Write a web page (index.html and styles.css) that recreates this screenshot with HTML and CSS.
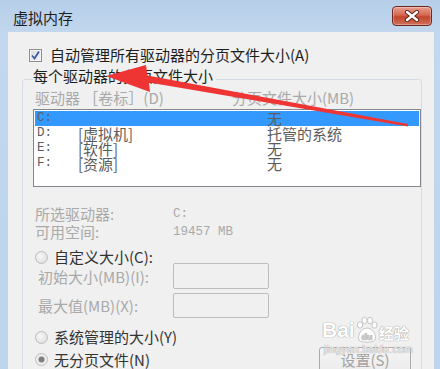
FILE: index.html
```html
<!DOCTYPE html>
<html lang="zh-CN">
<head>
  <meta charset="UTF-8" />
  <meta name="viewport" content="width=device-width, initial-scale=1.0"/>
  <title>虚拟内存</title>
  <link rel="stylesheet" href="styles.css">
</head>
<body>

  <div class="window">
    <header class="titlebar">
      <div class="title">虚拟内存</div>
      <button class="close-btn" aria-label="关闭">
        <svg width="16" height="12" viewBox="0 0 16 12">
          <path d="M3 2 L13 10 M13 2 L3 10" stroke="#5a231b" stroke-width="4.2" stroke-linecap="round"/>
          <path d="M3 2 L13 10 M13 2 L3 10" stroke="#fff" stroke-width="2.4" stroke-linecap="round"/>
        </svg>
      </button>
    </header>

    <div class="client">
      <label class="check-row">
        <span class="checkbox">
          <svg width="11" height="11" viewBox="0 0 11 11">
            <path d="M2 5.5 L4.5 8.5 L9 1.5" fill="none" stroke="#3c5aa3" stroke-width="1.8"/>
          </svg>
        </span>
        自动管理所有驱动器的分页文件大小(A)
      </label>

      <fieldset class="group">
        <legend>每个驱动器的分页文件大小</legend>

        <div class="cols">
          <span class="col-drive">驱动器 ［卷标］(D)</span>
          <span>分页文件大小(MB)</span>
        </div>

        <div class="list">
          <div class="row selected"><span class="drv">C:</span><span></span><span>无</span></div>
          <div class="row"><span class="drv">D:</span><span>[虚拟机]</span><span>托管的系统</span></div>
          <div class="row"><span class="drv">E:</span><span>[软件]</span><span>无</span></div>
          <div class="row"><span class="drv">F:</span><span>[资源]</span><span>无</span></div>
        </div>

        <div class="info">
          <span class="info-label">所选驱动器:</span><span class="mono">C:</span>
          <span class="info-label">可用空间:</span><span class="mono">19457 MB</span>
        </div>

        <div class="radio-row">
          <span class="radio"></span>自定义大小(C):
        </div>

        <div class="sizes">
          <span class="size-label">初始大小(MB)(I):</span><span class="field"></span>
          <span class="size-label">最大值(MB)(X):</span><span class="field"></span>
        </div>

        <div class="radio-row sys">
          <span class="radio"></span>系统管理的大小(Y)
        </div>

        <div class="bottom-row">
          <div class="radio-row">
            <span class="radio checked"></span>无分页文件(N)
          </div>
          <button class="btn">设置(S)</button>
        </div>
      </fieldset>
    </div>

    <div class="watermark">
      <span class="wm-bai">Bai</span>
      <svg class="wm-paw" width="24" height="28" viewBox="0 0 24 28">
        <ellipse cx="5" cy="9" rx="2.6" ry="3.2" fill="#fff" stroke="#c4c4c4"/>
        <ellipse cx="9.5" cy="4.5" rx="2.6" ry="3.2" fill="#fff" stroke="#c4c4c4"/>
        <ellipse cx="15" cy="4.5" rx="2.6" ry="3.2" fill="#fff" stroke="#c4c4c4"/>
        <ellipse cx="19.5" cy="9" rx="2.6" ry="3.2" fill="#fff" stroke="#c4c4c4"/>
        <path d="M12 12 C6 12 2 20 4 24 C6 27 18 27 20 24 C22 20 18 12 12 12 Z" fill="#fff" stroke="#c4c4c4"/>
        <text x="12" y="24" text-anchor="middle" font-family="Liberation Sans" font-weight="bold" font-size="9" fill="#d0d0d0">du</text>
      </svg>
      <span class="wm-jy">经验</span>
      <span class="wm-url">jingyan.baidu.com</span>
    </div>

    <svg class="arrow" width="440" height="369" viewBox="0 0 440 369">
      <polygon points="106,76 146,65 147.5,75.5 408,124 408,126.5 149,82.5 150,92" fill="#ef3434"/>
    </svg>
  </div>

</body>
</html>
```

FILE: styles.css
```css
* { box-sizing: border-box; }

body {
  margin: 0;
  font-family: "Noto Sans CJK SC", "Noto Sans", sans-serif;
  font-size: 15px;
  color: #1e1e1e;
  background: #bfd5ed;
}

.window {
  position: relative;
  width: 440px;
  height: 369px;
  overflow: hidden;
  padding: 0 6px 0 8px;
  background: linear-gradient(#b6cee9, #c3d8ee 36px, #bdd4ec);
}

/* title bar */

.titlebar {
  display: flex;
  justify-content: space-between;
  align-items: flex-start;
  height: 32px;
}

.title {
  margin: 9px 0 0 5px;
  line-height: 17px;
  color: #1e1e1e;
}

.close-btn {
  display: flex;
  align-items: center;
  justify-content: center;
  width: 40px;
  height: 20px;
  margin: 6px 2px 0 0;
  padding: 0;
  border: 1px solid #6e2a20;
  border-radius: 4px;
  background: linear-gradient(#e9a091, #d5664f 45%, #c2452c 55%, #d0705a);
  box-shadow: inset 0 0 0 1px rgba(255,255,255,0.3);
}

/* client area */

.client {
  height: 337px;
  padding: 14px 12px 0 14px;
  background: #f0f0f0;
}

.check-row {
  display: flex;
  align-items: center;
  gap: 8px;
  height: 18px;
  margin-left: 7px;
  line-height: 18px;
}

.checkbox {
  display: flex;
  align-items: center;
  justify-content: center;
  width: 13px;
  height: 13px;
  border: 1px solid #8f8f8f;
  background: linear-gradient(135deg, #dcdcdc, #f7f7f7);
  box-shadow: inset 0 0 0 1px #f4f4f4;
}

.group {
  margin: 4px 0 0;
  padding: 0 10px 14px;
  min-width: 0;
  border: 1px solid #d5dce3;
  border-radius: 3px;
}

.group legend {
  padding: 0 3px 6px 0;
  line-height: 16px;
  color: #1e1e1e;
}

.cols {
  display: flex;
  padding-left: 2px;
  line-height: 16px;
  color: #a9a9a9;
}

.col-drive {
  width: 197px;
}

/* drive list */

.list {
  height: 78px;
  margin: 3px -10px 0 0;
  padding: 1px;
  border: 1px solid #828790;
  background: #fff;
  color: #5c5c5c;
}

.row {
  display: grid;
  grid-template-columns: 41px 189px 1fr;
  height: 15px;
  padding-left: 2px;
  line-height: 15px;
}

.row.selected {
  background: #3399ff;
}

.drv, .mono {
  font-family: "Liberation Mono", monospace;
  font-size: 12.5px;
}

/* selected drive info */

.info {
  display: grid;
  grid-template-columns: 140px auto;
  margin-top: 18px;
  line-height: 18px;
  color: #a9a9a9;
}

.info-label {
  padding-left: 2px;
}

.radio-row {
  display: flex;
  align-items: center;
  gap: 6px;
  margin: 7px 0 0 2px;
  line-height: 18px;
  color: #333;
}

.radio-row.sys {
  margin-top: 10px;
}

.radio {
  width: 13px;
  height: 13px;
  border: 1px solid #bcbcbc;
  border-radius: 50%;
  background: radial-gradient(circle at 40% 40%, #f8f8f8, #dadada);
}

.radio.checked {
  background: radial-gradient(circle, #7e7e7e 0 2.6px, #cfcfcf 3.2px, #f3f3f3 4.2px, #dcdcdc);
}

.sizes {
  display: grid;
  grid-template-columns: 140px 96px;
  grid-template-rows: 26px 25px;
  row-gap: 4px;
  align-items: center;
  margin-top: -3px;
  color: #a9a9a9;
}

.size-label {
  padding-left: 5px;
}

.field {
  align-self: stretch;
  border: 1px solid #bdbdbd;
  border-radius: 2px;
  background: #f0f0f0;
}

.bottom-row {
  display: flex;
  justify-content: space-between;
  align-items: center;
  margin-top: 1px;
}

.bottom-row .radio-row {
  margin-top: 0;
}

.btn {
  width: 92px;
  height: 25px;
  padding: 0;
  border: 1px solid #adadad;
  border-radius: 3px;
  background: linear-gradient(#f6f6f6, #ebebeb);
  font: inherit;
  line-height: 1;
  color: #a3a3a3;
}

/* overlays */

.watermark {
  position: absolute;
  left: 322px;
  top: 316px;
  display: flex;
  align-items: center;
  color: #fff;
  text-shadow: 0 0 1px #9c9c9c, 0 0 1px #9c9c9c;
}

.wm-bai {
  font-family: "Liberation Sans", sans-serif;
  font-weight: bold;
  font-size: 21px;
}

.wm-jy {
  font-size: 15px;
  font-weight: bold;
  margin-top: 4px;
}

.wm-url {
  position: absolute;
  left: 2px;
  top: 28px;
  font-family: "Liberation Sans", sans-serif;
  font-size: 10px;
  color: rgba(255,255,255,0.85);
  letter-spacing: 0.5px;
}

.arrow {
  position: absolute;
  left: 0;
  top: 0;
  pointer-events: none;
}
```
